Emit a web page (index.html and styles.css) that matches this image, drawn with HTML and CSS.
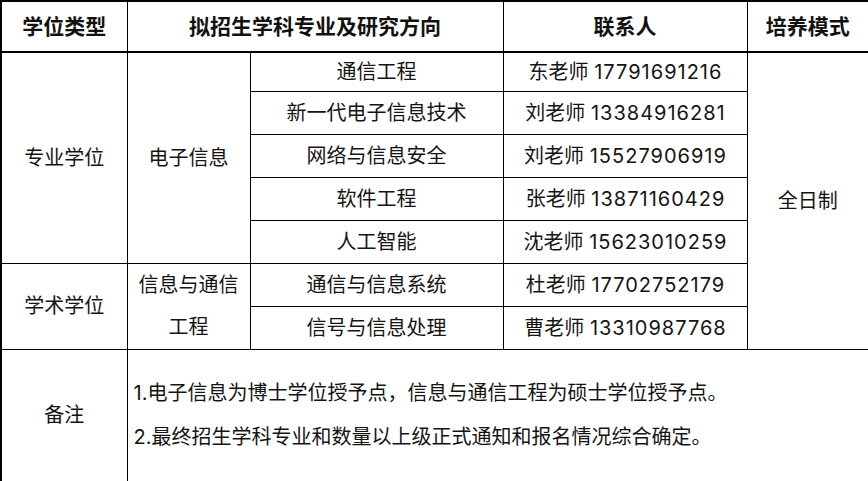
FILE: index.html
```html
<!DOCTYPE html>
<html lang="zh-CN">
<head>
<meta charset="utf-8">
<title>招生专业</title>
<link rel="stylesheet" href="styles.css">
</head>
<body>
<table class="plan">
  <colgroup>
    <col class="c1"><col class="c2"><col class="c3"><col class="c4"><col class="c5">
  </colgroup>
  <thead>
    <tr class="head">
      <th>学位类型</th>
      <th colspan="2">拟招生学科专业及研究方向</th>
      <th>联系人</th>
      <th>培养模式</th>
    </tr>
  </thead>
  <tbody>
    <tr class="first">
      <td rowspan="5">专业学位</td>
      <td rowspan="5">电子信息</td>
      <td>通信工程</td>
      <td>东老师 <span class="tel">17791691216</span></td>
      <td rowspan="7">全日制</td>
    </tr>
    <tr><td>新一代电子信息技术</td><td>刘老师 <span class="tel">13384916281</span></td></tr>
    <tr><td>网络与信息安全</td><td>刘老师 <span class="tel">15527906919</span></td></tr>
    <tr><td>软件工程</td><td>张老师 <span class="tel">13871160429</span></td></tr>
    <tr><td>人工智能</td><td>沈老师 <span class="tel">15623010259</span></td></tr>
    <tr>
      <td rowspan="2">学术学位</td>
      <td rowspan="2" class="wrap">信息与通信工程</td>
      <td>通信与信息系统</td>
      <td>杜老师 <span class="tel">17702752179</span></td>
    </tr>
    <tr><td>信号与信息处理</td><td>曹老师 <span class="tel">13310987768</span></td></tr>
    <tr class="remark">
      <td>备注</td>
      <td colspan="4" class="notes">
        <p>1.电子信息为博士学位授予点，信息与通信工程为硕士学位授予点。</p>
        <p>2.最终招生学科专业和数量以上级正式通知和报名情况综合确定。</p>
      </td>
    </tr>
  </tbody>
</table>
</body>
</html>
```

FILE: styles.css
```css
html, body {
  margin: 0;
  padding: 0;
  background: #ffffff;
}

body {
  font-family: "Inter", "Noto Sans CJK SC", "Noto Sans", sans-serif;
  color: #141414;
}

.plan {
  width: 868px;
  table-layout: fixed;
  border-collapse: collapse;
  border: 2px solid #000;
  font-size: 20px;
}

.c1 { width: 126px; }
.c2 { width: 123px; }
.c3 { width: 253px; }
.c4 { width: 244px; }
.c5 { width: 122px; }

.plan th,
.plan td {
  border: 1px solid #000;
  padding: 0 4px;
  text-align: center;
  vertical-align: middle;
  line-height: 26px;
  font-weight: 400;
}

.head { height: 51px; }

.head th {
  font-size: 21px;
  font-weight: 700;
  border-bottom: 2px solid #000;
  color: #111;
}

.plan tbody tr { height: 43px; }
.plan tbody tr.first { height: 39px; }
.plan tbody tr.remark { height: 133px; }

.tel {
  letter-spacing: 1px;
  margin-right: -1px;
}

.plan td.wrap {
  line-height: 42px;
}

.plan td.notes {
  text-align: left;
  padding: 0 6px;
  line-height: 44px;
}

.notes p {
  margin: 0;
}
```
